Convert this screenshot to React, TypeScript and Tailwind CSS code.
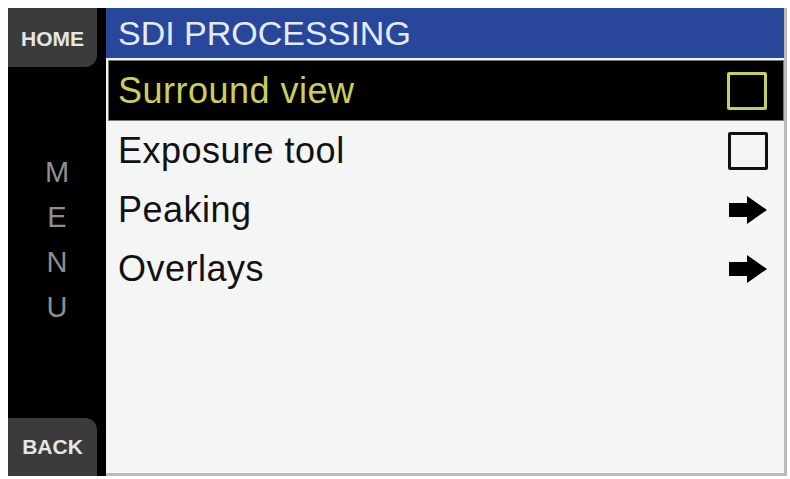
import React from "react"

type Row = { label: string; kind: "check" | "arrow"; selected?: boolean }

const rows: Row[] = [
  { label: "Surround view", kind: "check", selected: true },
  { label: "Exposure tool", kind: "check" },
  { label: "Peaking", kind: "arrow" },
  { label: "Overlays", kind: "arrow" },
]

// Solid block arrow used for rows that open a submenu.
function BlockArrow() {
  return (
    <svg width="38" height="28" viewBox="0 0 38 28" className="block">
      <path d="M0 7 H18 V0 L38 14 L18 28 V21 H0 Z" fill="#000" />
    </svg>
  )
}

function Checkbox({ active }: { active?: boolean }) {
  return (
    <div
      className={
        active
          ? "h-[38px] w-[40px] rounded-[2px] border-[3px] border-[#c9cf5a]"
          : "h-[38px] w-[40px] rounded-[2px] border-[3px] border-[#111]"
      }
    />
  )
}

export default function App() {
  return (
    <div
      className="h-[479px] w-[790px] bg-white pb-[3px] pl-[8px] pr-[3px] pt-[8px]"
      style={{ fontFamily: '"Liberation Sans", Arial, sans-serif' }}
    >
      <div className="flex h-full w-full">
        {/* Left rail: HOME / MENU / BACK */}
        <div className="flex w-[98px] shrink-0 flex-col justify-between bg-black">
          <div className="flex h-[59px] w-[89px] items-center justify-center rounded-br-[12px] bg-[#3b3b3b] pt-[2px] text-[21px] font-bold text-[#e6e6e6]">
            HOME
          </div>
          <div className="-mt-[6px] flex flex-col items-center gap-[14px] text-[29px] leading-[31px] text-[#8f8f8f]">
            <span>M</span>
            <span>E</span>
            <span>N</span>
            <span>U</span>
          </div>
          <div className="flex h-[58px] w-[89px] items-center justify-center rounded-tr-[12px] bg-[#3b3b3b] text-[21px] font-bold text-[#e6e6e6]">
            BACK
          </div>
        </div>

        {/* Menu page */}
        <div className="flex flex-1 flex-col border-b-[3px] border-r-[3px] border-[#b9bcbb] bg-[#f4f6f5]">
          <div className="flex h-[50px] items-center bg-[#28479a] pl-[12px] text-[34px] text-[#e3ebff]">
            SDI PROCESSING
          </div>
          <div className="flex flex-col pl-[2px] pt-[2px]">
            {rows.map((r) => (
              <div
                key={r.label}
                className={
                  r.selected
                    ? "flex h-[61px] items-center justify-between border border-[#777] bg-black pl-[9px] pr-[16px] text-[36px] tracking-[0.5px] text-[#c9cf5a]"
                    : "flex h-[59px] items-center justify-between pl-[10px] pr-[16px] text-[36px] tracking-[0.5px] text-[#111]"
                }
              >
                <span>{r.label}</span>
                {r.kind === "check" ? (
                  <Checkbox active={r.selected} />
                ) : (
                  <div className="pr-[1px]">
                    <BlockArrow />
                  </div>
                )}
              </div>
            ))}
          </div>
        </div>
      </div>
    </div>
  )
}
